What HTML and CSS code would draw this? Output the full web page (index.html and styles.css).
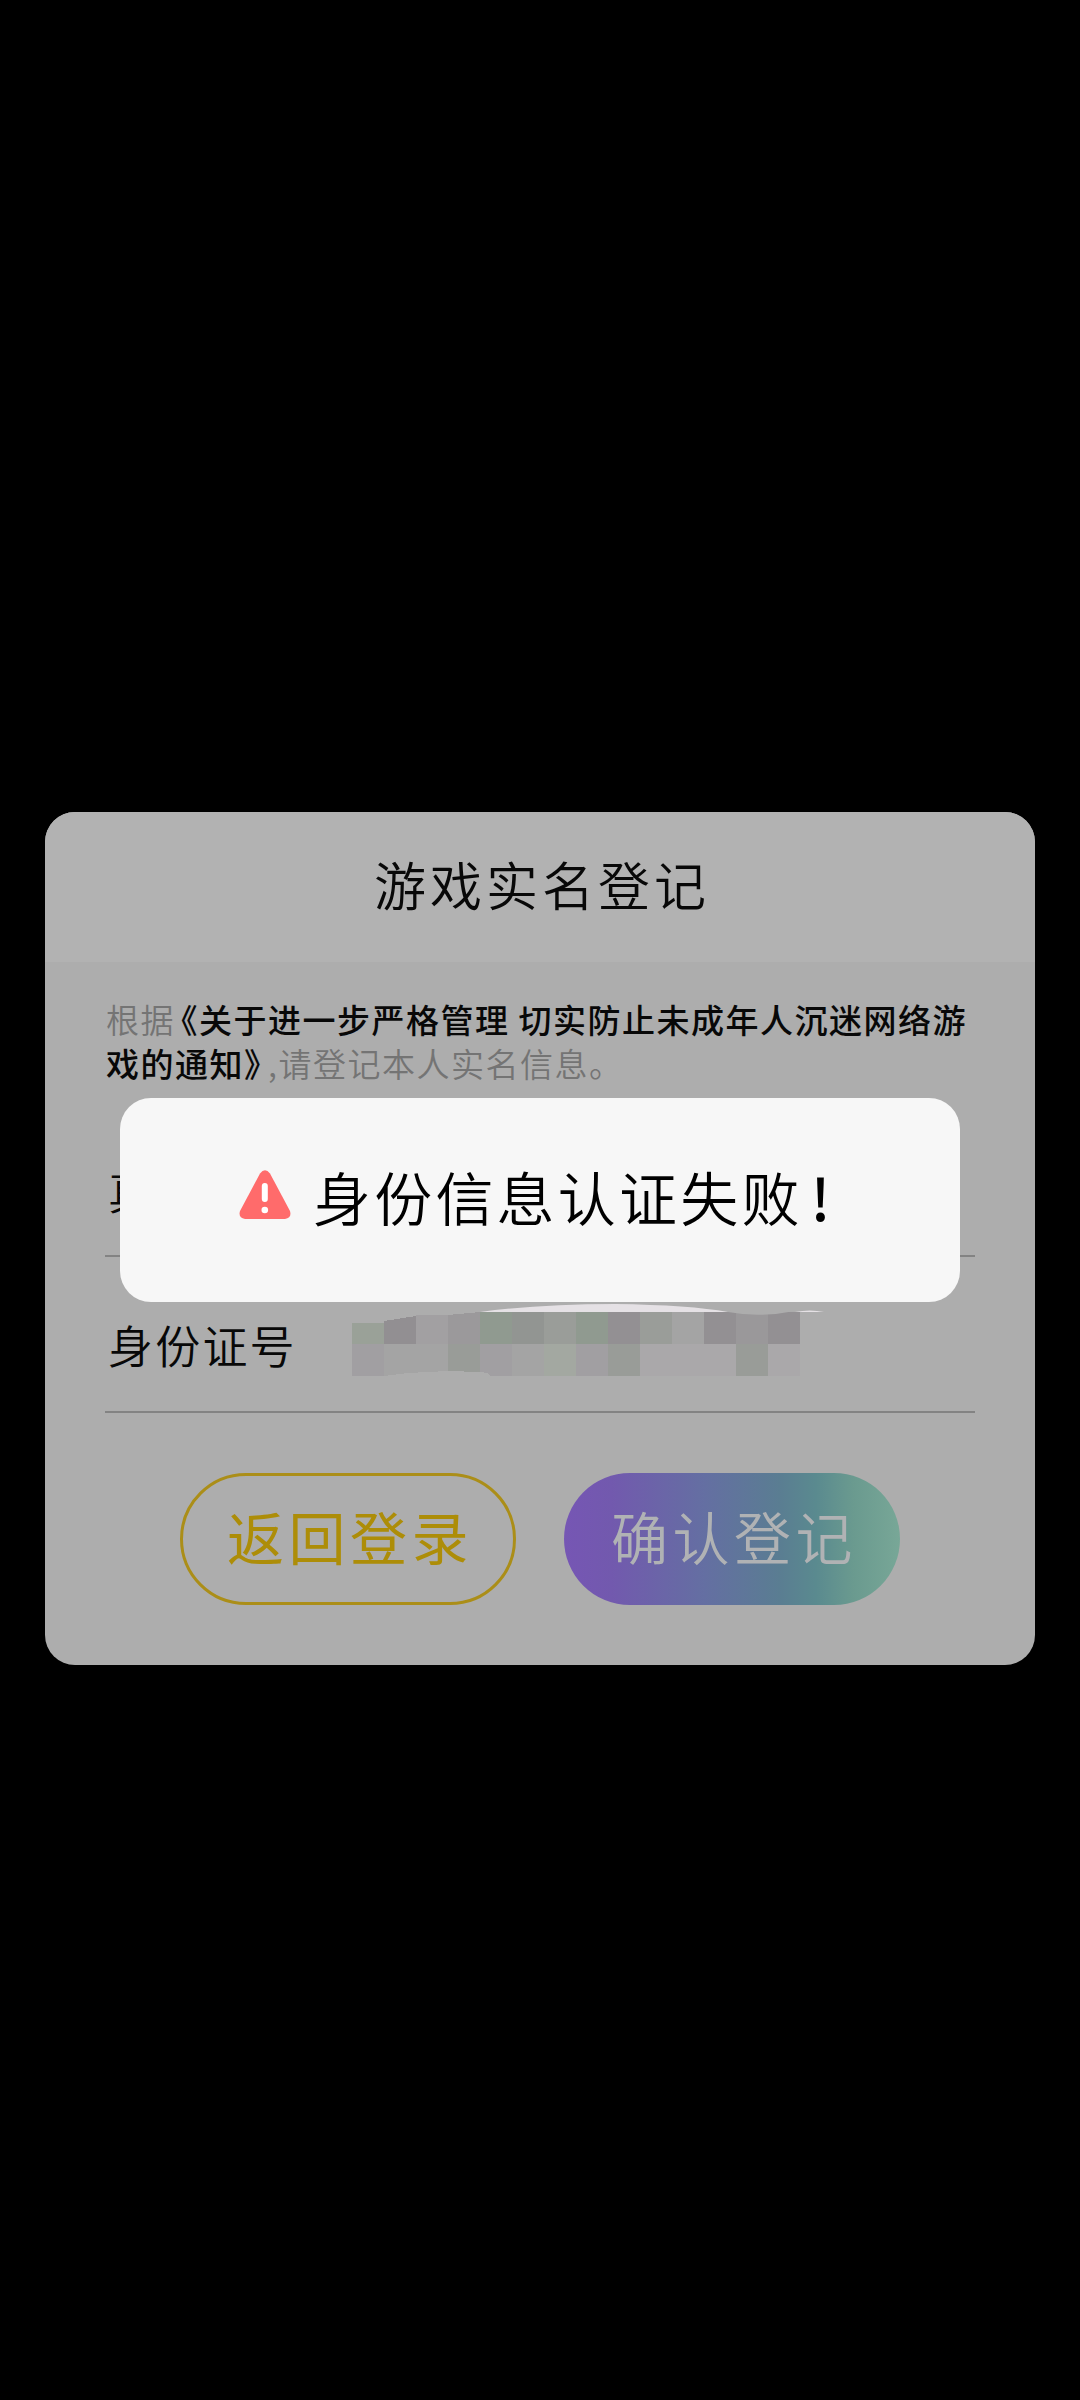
FILE: index.html
```
<!DOCTYPE html>
<html lang="zh-CN">
<head>
<meta charset="utf-8">
<title>游戏实名登记</title>
<link rel="stylesheet" href="styles.css">
</head>
<body>
<main class="card">
  <header class="card-header"><h1 class="title">游戏实名登记</h1></header>
  <section class="card-body">
    <p class="notice">根据<strong><span class="open">《</span>关于进一步严格管理 切实防止未成年人沉迷网络游<br>戏的通知<span class="close">》</span></strong>,请登记本人实名信息。</p>
    <div class="field field-name"><span class="label">真实姓名</span></div>
    <div class="field field-id">
      <span class="label">身份证号</span>
      <svg class="mosaic" width="500" height="92" viewBox="330 1300 500 92" shape-rendering="crispEdges">
        <path d="M480 1312Q540 1304 615 1304Q690 1305 728 1312ZM795 1312Q810 1309 824 1312Z" fill="#e5e1e5" shape-rendering="auto"/>
        <path d="M352 1323H384V1344H352Z" fill="#9aa198"/>
        <path d="M384 1321L416 1316V1344H384Z" fill="#928f92"/>
        <path d="M416 1315H448V1344H416Z" fill="#a2a0a2"/>
        <path d="M448 1315L480 1312V1344H448Z" fill="#9b999b"/>
        <path d="M480 1312H512V1344H480ZM576 1312H608V1344H576Z" fill="#909a90"/>
        <path d="M512 1312H544V1344H512Z" fill="#929592"/>
        <path d="M544 1312H576V1344H544ZM640 1312H672V1344H640Z" fill="#9a9d99"/>
        <path d="M608 1312H640V1344H608ZM704 1312H736V1344H704ZM768 1312H800V1344H768Z" fill="#939093"/>
        <path d="M672 1312H704V1344H672Z" fill="#a4a4a4"/>
        <path d="M736 1312H768V1344H736Z" fill="#9a989a"/>
        <path d="M352 1344H384V1376H352ZM576 1344H608V1376H576ZM480 1344H512V1376H490L488 1373L480 1372Z" fill="#a19fa2"/>
        <path d="M384 1344H448V1371L408 1373L384 1376ZM512 1344H544V1376H512Z" fill="#a4a4a4"/>
        <path d="M448 1344H480V1372L448 1371ZM608 1344H640V1376H608ZM736 1344H768V1376H736Z" fill="#999c98"/>
        <path d="M544 1344H576V1376H544Z" fill="#a3a8a1"/>
        <path d="M640 1344H736V1376H640ZM768 1344H800V1376H768Z" fill="#aaa8aa"/>
        <path d="M728 1312Q760 1318 795 1311L780 1309H735Z" fill="#adadad" shape-rendering="auto"/>
      </svg>
    </div>
    <div class="actions">
      <button class="btn btn-back">返回登录</button>
      <button class="btn btn-confirm">确认登记</button>
    </div>
  </section>
</main>
<div class="toast" role="alert">
  <svg class="warn" width="52" height="49" viewBox="0 0 52 49">
    <path d="M21 3.5Q26-3 31 3.5L51 41Q53 48 46 49H6Q-1 48 1 41Z" fill="#ff6b6b"/>
    <rect x="22.8" y="13" width="6" height="19" rx="3" fill="#fff"/>
    <circle cx="25.8" cy="40" r="3.3" fill="#fff"/>
  </svg>
  <span class="toast-text">身份信息认证失败<span class="mark">!</span></span>
</div>
</body>
</html>
```
FILE: styles.css
```
* { box-sizing: border-box; }
body {
  margin: 0;
  min-height: 2400px;
  padding: 811.5px 45px 0;
  background: #000;
  color: #080808;
  font-family: "Noto Sans CJK SC", sans-serif;
  font-weight: 350;
}
.card {
  height: 853px;
  border-radius: 30px;
  overflow: hidden;
  background: #adadad;
}
.card-header {
  height: 150px;
  display: flex;
  justify-content: center;
  background: #b2b2b2;
}
.title {
  margin: 0;
  padding-left: 4px;
  font-size: 52px;
  font-weight: 350;
  letter-spacing: 4px;
  line-height: 144px;
}
.card-body { padding: 35px 60px 0; }
.notice {
  margin: 0;
  height: 109.5px;
  padding-left: 1px;
  font-size: 33px;
  line-height: 44px;
  letter-spacing: 1.5px;
  color: #747474;
  white-space: nowrap;
}
.notice strong { font-weight: 500; color: #080808; }
.open, .close { font-feature-settings: "halt"; }
.open { margin-left: 6px; }
.close { margin-right: 6px; }
.field {
  position: relative;
  display: flex;
  align-items: center;
  border-bottom: 2px solid #838383;
  padding-left: 3px;
}
.field-name { height: 151px; padding-top: 20px; }
.field-id { height: 156px; padding-top: 21px; }
.label { font-size: 45px; letter-spacing: 2.2px; line-height: 60px; }
.mosaic { position: absolute; left: 225px; top: 43px; }
.actions { display: flex; justify-content: center; gap: 48px; margin-top: 60px; }
.btn {
  width: 336px;
  height: 132px;
  padding: 0 0 7px 4px;
  border-radius: 66px;
  font: 400 57px/1 "Noto Sans CJK SC", sans-serif;
  letter-spacing: 4.5px;
}
.btn-back { background: none; border: 3px solid #ab8e18; color: #ad8d08; }
.btn-confirm {
  border: 0;
  color: #b0b2b4;
  font-weight: 350;
  background: linear-gradient(90deg, #7656b4 0%, #7259ae 14%, #646fa2 42%, #5a7d92 64%, #5a8a8f 75%, #6a9a8f 86%, #78a797 100%);
}
.toast {
  position: absolute;
  left: 120px;
  top: 1098px;
  width: 840px;
  height: 204px;
  border-radius: 31px;
  background: #f7f7f7;
  display: flex;
  align-items: center;
  padding-left: 119px;
  color: #000;
}
.warn { margin-bottom: 12px; }
.toast-text { margin: 0 0 8px 22px; font-size: 58px; letter-spacing: 3.2px; line-height: 80px; white-space: nowrap; }
.mark { margin-left: 8px; font-weight: 500; }
```
